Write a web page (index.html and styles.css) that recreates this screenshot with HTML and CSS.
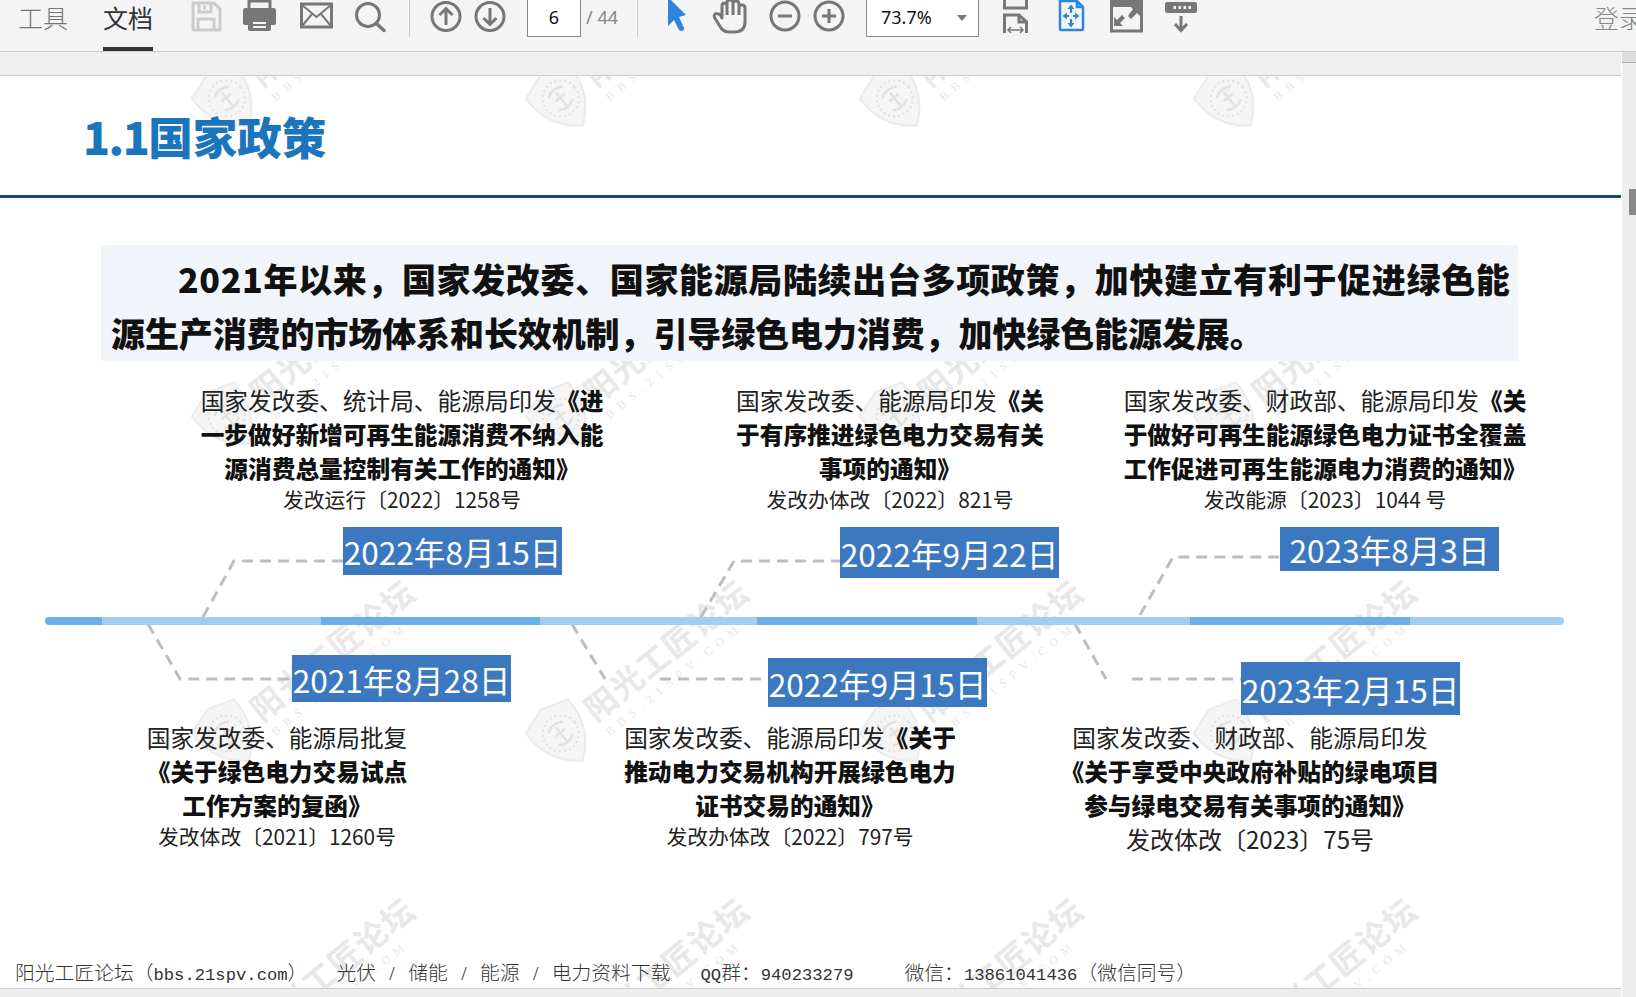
FILE: index.html
```html
<!DOCTYPE html>
<html lang="zh-CN">
<head>
<meta charset="utf-8">
<title>1.1国家政策</title>
<link rel="stylesheet" href="styles.css">
</head>
<body>
<header class="toolbar">
  <span class="tab">工具</span>
  <span class="tab tab-active">文档</span>
  <div class="group group-file">
    <svg class="icon ic-light" viewBox="0 0 34 34"><path d="M4 3H25L31 9V29Q31 30 30 30H5Q4 30 4 29Z"/><path d="M10 3V12H22V3M15.5 5.5V9M9 30V19H25V30"/></svg>
    <svg class="icon" viewBox="0 0 34 34"><path d="M5 9V1H26V9"/><path class="solid" d="M1 8H30Q32 8 32 11V23Q32 25 30 25H26V19H5V25H1Q-1 25 -1 23V11Q-1 8 1 8Z"/><path class="solid" d="M4 18H27V29Q27 31 25 31H6Q4 31 4 29ZM9 22V24H22V22ZM9 26V28H22V26Z" fill-rule="evenodd"/></svg>
    <svg class="icon" viewBox="0 0 34 34"><rect x="2.5" y="4" width="30" height="23"/><path d="M3 5L17.5 17L32 5M3 26L13 14M32 26L22 14" stroke-width="2"/></svg>
    <svg class="icon" viewBox="1 0 34 34"><circle cx="15" cy="15" r="11.5"/><path d="M23.5 23.5L31 30.5" stroke-width="3.5" stroke-linecap="round"/></svg>
  </div>
  <i class="divider divider-a"></i>
  <div class="group group-nav">
    <svg class="icon" viewBox="0 0 34 34"><circle cx="17" cy="16.5" r="14"/><path d="M17 25V9M10.5 15L17 8.5L23.5 15"/></svg>
    <svg class="icon" viewBox="0 0 34 34"><circle cx="17" cy="16.5" r="14"/><path d="M17 8V24M10.5 18L17 24.5L23.5 18"/></svg>
  </div>
  <div class="field field-page">6</div>
  <span class="total">/ 44</span>
  <i class="divider divider-b"></i>
  <div class="group group-view">
    <svg class="icon" viewBox="0 0 34 34"><path class="blue" d="M8 -3L26 15L19 17L24 28Q24.500 31 21.500 31Q19.500 31 18.500 29L14 20L8 26Z"/></svg>
    <svg class="icon" viewBox="0 0 34 34"><path d="M7 28L0.500 17.500Q-0.500 13.500 3 13.500Q5 13.500 7 16L8 18V6Q8 3 10.500 3Q13 3 13 6V2.500Q13 0 16 0Q19 0 19 2.500V3.500Q19 1 22 1Q25 1 25 4V7.500Q25 5 28 5Q31 5 31 8V22Q31 32 20 32H15Q10 32 7 28ZM13 6V15M19 3V15M25 7V15" stroke-linejoin="round"/></svg>
    <svg class="icon" viewBox="0 0 34 34"><circle cx="17" cy="16" r="14"/><path d="M10 16H24"/></svg>
    <svg class="icon icon-plus" viewBox="0 0 34 34"><circle cx="17" cy="16" r="14"/><path d="M10 16H24M17 9V23"/></svg>
  </div>
  <div class="field field-zoom"><span>73.7%</span><i class="caret"></i></div>
  <div class="group group-fit">
    <svg class="icon" viewBox="0 0 34 34"><path d="M6.500 -3V8H28.500V-3"/><path d="M6.500 33V15H21L28.500 22V33M21 15V22H28.500"/><path d="M10 30H25M13 27L10 30L13 33M22 27L25 30L22 33" stroke-width="1.500"/></svg>
    <svg class="icon" viewBox="0 0 34 34"><path class="blue-line" d="M6 1H23L29 7V29Q29 30 28 30H7Q6 30 6 29ZM23 1V7H29"/><path class="blue" d="M17 4.500L20.500 9H18V13H16V9H13.500ZM17 27.500L20.500 23H18V19H16V23H13.500ZM8.500 16L13 12.500V15H15V17H13V19.500ZM25.500 16L21 12.500V15H19V17H21V19.500Z"/></svg>
    <svg class="icon" viewBox="0 0 34 34"><rect x="1.500" y="1" width="30" height="30"/><path class="solid" d="M0 0H33V7H0Z"/><path class="solid" d="M20 6H30V16L27 13L21 19L18 16L23 9ZM4 26V17L7 20L12 15L15 18L10 23L13 26Z"/></svg>
    <svg class="icon" viewBox="2 0 34 34"><path class="solid" d="M3 2H31Q33 2 33 4V11Q33 13 31 13H3Q1 13 1 11V4Q1 2 3 2ZM9.500 6V9H12V6ZM14.500 6V9H17V6ZM19.500 6V9H22V6ZM24.500 6V9H27V6Z" fill-rule="evenodd"/><path d="M17 16V30M11 24L17 30.500L23 24"/></svg>
  </div>
  <span class="login">登录</span>
</header>

<div class="workspace">
  <div class="viewer">
    <div class="band"></div>
    <main class="page">
      <svg class="watermarks" viewBox="0 76 1621 912">
        <defs>
          <g id="wm">
            <g transform="rotate(-39)">
              <path class="wm-shield" d="M0 -33L27 -24Q29 12 0 33Q-29 12 -27 -24Z"/>
              <circle class="wm-dots" cx="0" cy="-2" r="18"/>
              <path class="wm-ring" d="M-9 -10Q0 -16 9 -10M-9 6Q0 12 9 6M0 -10V8M-6 -3H6"/>
              <text class="wm-main" x="34" y="12">阳光工匠论坛</text>
              <text class="wm-sub" x="36" y="31">BBS.21SPV.COM</text>
            </g>
          </g>
        </defs>
        <use href="#wm" x="228" y="100"/><use href="#wm" x="562" y="100"/><use href="#wm" x="896" y="100"/><use href="#wm" x="1230" y="100"/>
        <use href="#wm" x="228" y="418"/><use href="#wm" x="562" y="418"/><use href="#wm" x="896" y="418"/><use href="#wm" x="1230" y="418"/>
        <use href="#wm" x="228" y="735"/><use href="#wm" x="562" y="735"/><use href="#wm" x="896" y="735"/><use href="#wm" x="1230" y="735"/>
        <use href="#wm" x="228" y="1053"/><use href="#wm" x="562" y="1053"/><use href="#wm" x="896" y="1053"/><use href="#wm" x="1230" y="1053"/>
      </svg>

      <h1 class="title"><span class="title-num">1.1</span>国家政策</h1>
      <div class="rule"></div>
      <p class="intro"><span class="intro-first">2021年以来，国家发改委、国家能源局陆续出台多项政策，加快建立有利于促进绿色能</span><br>源生产消费的市场体系和长效机制，引导绿色电力消费，加快绿色能源发展。</p>

      <svg class="connectors" viewBox="0 76 1621 912">
        <path d="M203 617L234 561H343"/>
        <path d="M148 624L180 679H292"/>
        <path d="M701 617L734 561H840"/>
        <path d="M572 624L605 679M660 679H768"/>
        <path d="M1140 615L1173 557H1280"/>
        <path d="M1075 624L1106 679M1132 679H1241"/>
      </svg>

      <div class="bar">
        <i class="dark"></i><i class="light"></i><i class="dark"></i><i class="light"></i><i class="dark"></i><i class="light"></i><i class="dark"></i><i class="light"></i>
      </div>

      <div class="date date-a">2022年8月15日</div>
      <div class="date date-b">2022年9月22日</div>
      <div class="date date-c">2023年8月3日</div>
      <div class="date date-d">2021年8月28日</div>
      <div class="date date-e">2022年9月15日</div>
      <div class="date date-f">2023年2月15日</div>

      <div class="note note-a">国家发改委、统计局、能源局印发<b>《进<br>一步做好新增可再生能源消费不纳入能<br>源消费总量控制有关工作的通知》</b><small>发改运行〔2022〕1258号</small></div>
      <div class="note note-b">国家发改委、能源局印发<b>《关<br>于有序推进绿色电力交易有关<br>事项的通知》</b><small>发改办体改〔2022〕821号</small></div>
      <div class="note note-c">国家发改委、财政部、能源局印发<b>《关<br>于做好可再生能源绿色电力证书全覆盖<br>工作促进可再生能源电力消费的通知》</b><small>发改能源〔2023〕1044 号</small></div>
      <div class="note note-d">国家发改委、能源局批复<br><b>《关于绿色电力交易试点<br>工作方案的复函》</b><small>发改体改〔2021〕1260号</small></div>
      <div class="note note-e">国家发改委、能源局印发<b>《关于<br>推动电力交易机构开展绿色电力<br>证书交易的通知》</b><small>发改办体改〔2022〕797号</small></div>
      <div class="note note-f">国家发改委、财政部、能源局印发<br><b>《关于享受中央政府补贴的绿电项目<br>参与绿电交易有关事项的通知》</b><small class="large">发改体改〔2023〕75号</small></div>

      <footer class="foot">
        <span>阳光工匠论坛（<span class="lat">bbs.21spv.com</span>）</span>
        <span class="foot-topics">光伏 <span class="sep">/</span> 储能 <span class="sep">/</span> 能源 <span class="sep">/</span> 电力资料下载</span>
        <span class="foot-qq"><span class="lat">QQ</span>群：<span class="lat">940233279</span></span>
        <span class="foot-wx">微信：<span class="lat">13861041436</span>（微信同号）</span>
      </footer>
    </main>
  </div>
  <aside class="scrollbar">
    <div class="scroll-head"></div>
    <div class="scroll-thumb"></div>
  </aside>
</div>
</body>
</html>
```

FILE: styles.css
```css
* { box-sizing: border-box; }

html, body {
  margin: 0;
  height: 100%;
  overflow: hidden;
}

body {
  width: 1636px;
  height: 997px;
  background: #eeeeee;
  font-family: "Noto Sans CJK SC", "Noto Sans", sans-serif;
  color: #222;
}

/* toolbar */
.toolbar {
  display: flex;
  align-items: flex-start;
  height: 52px;
  padding-left: 18px;
  background: #f4f4f4;
  border-bottom: 1px solid #cccccc;
  overflow: hidden;
}

.tab {
  position: relative;
  width: 50px;
  height: 51px;
  padding-top: 1px;
  font-size: 25px;
  line-height: 32px;
  font-weight: 300;
  white-space: nowrap;
  color: #777;
}

.tab-active {
  margin-left: 35px;
  color: #333;
  font-weight: 400;
  border-bottom: 4px solid #333;
}

.group { display: flex; }

.icon {
  flex: none;
  width: 34px;
  height: 34px;
  overflow: visible;
  fill: none;
  stroke: #777;
  stroke-width: 3;
}

.ic-light { stroke: #cccccc; }
.solid { fill: #777; stroke: none; }
.blue { fill: #2d86d9; stroke: none; }
.blue-line { stroke: #2d86d9; stroke-width: 2.5; }

.group-file { margin-left: 36px; gap: 21px; }
.group-nav { margin-left: 19px; gap: 10px; }
.group-view { margin-left: 22px; gap: 20px; }
.group-view .icon-plus { margin-left: -10px; }
.group-fit { margin-left: 19px; gap: 22px; }

.divider {
  flex: none;
  width: 1px;
  height: 37px;
  background: #cccccc;
}

.divider-a { margin-left: 21px; }
.divider-b { margin-left: 19px; }

.field {
  flex: none;
  height: 37px;
  margin-top: 0;
  background: #fff;
  border: 1px solid #888;
  border-top: 0;
  font-size: 18px;
  line-height: 34px;
  color: #111;
  font-family: "Noto Sans", sans-serif;
}

.field-page {
  width: 54px;
  margin-left: 20px;
  text-align: center;
}

.total {
  margin-left: 5px;
  width: 32px;
  font-size: 18px;
  line-height: 34px;
  color: #888;
  white-space: nowrap;
  font-family: "Noto Sans", sans-serif;
}

.field-zoom {
  display: flex;
  width: 113px;
  margin-left: 20px;
  padding-left: 14px;
}

.caret {
  margin: 15px 0 0 25px;
  width: 0;
  height: 0;
  border: 5px solid transparent;
  border-top: 6px solid #777;
  border-bottom: 0;
}

.login {
  flex: none;
  margin-left: auto;
  margin-right: -8px;
  width: 50px;
  padding-top: 1px;
  font-size: 25px;
  line-height: 32px;
  font-weight: 300;
  color: #888;
  white-space: nowrap;
}

/* workspace */
.workspace {
  display: flex;
  height: 945px;
}

.viewer {
  flex: none;
  width: 1621px;
  display: flex;
  flex-direction: column;
}

.band {
  flex: none;
  height: 24px;
  background: #efefef;
  border-bottom: 1px solid #cccccc;
}

.page {
  position: relative;
  flex: none;
  height: 913px;
  background: #fff;
  border-bottom: 1px solid #cccccc;
  overflow: hidden;
}

.watermarks, .connectors {
  position: absolute;
  left: 0;
  top: 0;
  width: 1621px;
  height: 912px;
}

.wm-shield { fill: #f5f5f5; stroke: #ebebeb; stroke-width: 2; }
.wm-dots { fill: none; stroke: #e0e0e0; stroke-width: 2; stroke-dasharray: 2 3; }
.wm-ring { fill: none; stroke: #e2e2e2; stroke-width: 2.5; }
.wm-main { font-size: 32px; font-weight: 700; letter-spacing: 1.500px; fill: #e8e8e8; }
.wm-sub { font-family: "Liberation Serif", serif; font-size: 12px; letter-spacing: 6.500px; fill: #e8e8e8; }

.connectors path {
  fill: none;
  stroke: #bdbdbd;
  stroke-width: 3;
  stroke-dasharray: 11 7;
}

/* heading */
.title {
  position: relative;
  margin: 0;
  height: 119px;
  padding: 35px 0 0 83px;
  font-size: 44.500px;
  line-height: 50px;
  font-weight: 900;
  color: #1a75bc;
  white-space: nowrap;
}

.title-num { letter-spacing: -1.500px; }

.rule {
  position: relative;
  height: 3px;
  background: #1a4480;
}

.intro {
  position: relative;
  margin: 47px 0 0 101px;
  width: 1417px;
  height: 116px;
  padding: 7px 0 0 10px;
  background: #f1f4f9;
  font-size: 34px;
  line-height: 54px;
  font-weight: 900;
  color: #111;
  white-space: nowrap;
  letter-spacing: -0.100px;
}

.intro-first { margin-left: 67px; letter-spacing: 0.640px; }

/* timeline */
.bar {
  position: absolute;
  left: 45px;
  top: 541px;
  width: 1519px;
  height: 8px;
  display: grid;
  grid-template-columns: 57px 219px 219px 217px 220px 213px 220px 154px;
  border-radius: 4px;
  overflow: hidden;
}

.dark { background: #6bb0e4; }
.light { background: #a3cdf0; }

.date {
  position: absolute;
  width: 219px;
  display: flex;
  align-items: center;
  justify-content: center;
  background: #3b78bf;
  color: #fff;
  font-size: 31.600px;
  white-space: nowrap;
}

.date-a { left: 343px; top: 451px; height: 48px; }
.date-b { left: 840px; top: 451px; height: 51px; }
.date-c { left: 1280px; top: 451px; height: 44px; }
.date-d { left: 292px; top: 579px; height: 47px; }
.date-e { left: 768px; top: 582px; height: 49px; }
.date-f { left: 1241px; top: 586px; height: 53px; }

.note {
  position: absolute;
  width: 460px;
  text-align: center;
  font-size: 23.700px;
  line-height: 34px;
  white-space: nowrap;
  color: #222;
}

.note b { color: #111; font-weight: 900; }

.note small {
  display: block;
  font-size: 20.800px;
  line-height: 28px;
}

.note small.large {
  font-size: 24px;
  line-height: 34px;
}

.note-a { left: 172px; top: 307px; }
.note-b { left: 660px; top: 307px; }
.note-c { left: 1095px; top: 307px; }
.note-d { left: 47px; top: 644px; }
.note-e { left: 560px; top: 644px; }
.note-f { left: 1020px; top: 644px; }

/* footer line on the slide */
.foot {
  position: absolute;
  left: 15px;
  top: 882px;
  display: flex;
  font-size: 19.800px;
  line-height: 28px;
  font-weight: 300;
  color: #333;
  white-space: nowrap;
}

.lat {
  font-family: "Liberation Mono", monospace;
  font-size: 17.200px;
}

.sep {
  padding: 0 9px;
  font-family: "Liberation Serif", serif;
}

.foot-topics { margin-left: 29px; }
.foot-qq { margin-left: 30px; }
.foot-wx { margin-left: 51px; }

/* scrollbar */
.scrollbar {
  flex: none;
  width: 15px;
  display: flex;
  flex-direction: column;
  background: #eeeeee;
  border-left: 1px solid #fff;
}

.scroll-head {
  flex: none;
  height: 11px;
  background: #dddddd;
  border-bottom: 1px solid #aaaaaa;
}

.scroll-thumb {
  flex: none;
  align-self: flex-end;
  width: 7px;
  height: 26px;
  margin-top: 126px;
  background: #888;
}
```
